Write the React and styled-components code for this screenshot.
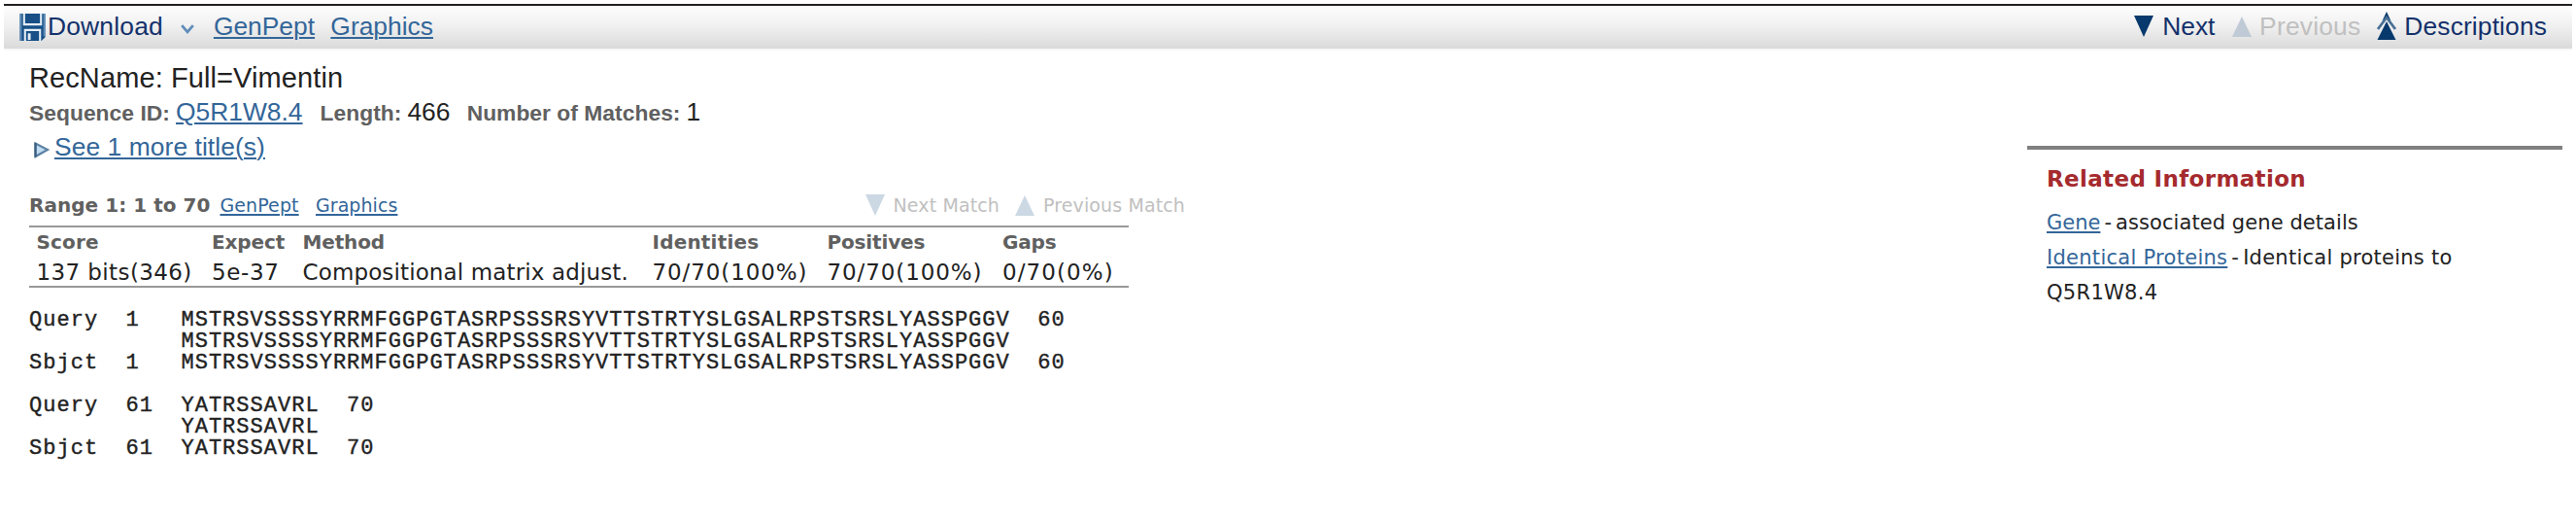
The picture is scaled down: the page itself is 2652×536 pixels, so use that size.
import React from "react";
import styled, { createGlobalStyle } from "styled-components";

const GlobalStyle = createGlobalStyle`
  html, body { margin: 0; background: #fff; }
  body { color: #222; font-family: "Liberation Sans", Arial, sans-serif; }
`;

const Page = styled.div`
  height: 536px;
  overflow: hidden;
  box-sizing: border-box;
  padding: 4px 4px 0;
`;

const Toolbar = styled.header`
  display: flex;
  justify-content: space-between;
  height: 44px;
  padding: 0 26px 0 16px;
  border-top: 2px solid #231f20;
  border-bottom: 2px solid #f7f7f7;
  background: linear-gradient(#fdfdfd, #f1f1f1 45%, #dadada);
  font-size: 26.4px;
  line-height: 42px;
  color: #14316b;
`;

const ToolGroup = styled.div`
  display: flex;
  align-items: flex-start;
  white-space: pre;
`;

const ToolLabel = styled.span`
  letter-spacing: ${(p) => p.$spacing || 0}px;
  margin-left: ${(p) => p.$before || 0}px;
  color: ${(p) => (p.$disabled ? "#c0c0c0" : "inherit")};
`;

const Icon = styled.svg`
  display: block;
  flex: none;
  overflow: visible;
  margin-top: ${(p) => p.$top || 0}px;
  margin-left: ${(p) => p.$before || 0}px;
`;

const Link = styled.a`
  color: #336699;
  text-decoration: underline;
  text-decoration-thickness: 2px;
  text-underline-offset: 2px;
  margin-left: ${(p) => p.$before || 0}px;
  letter-spacing: ${(p) => p.$spacing || 0}px;
`;

const Columns = styled.div`
  display: flex;
  justify-content: space-between;
  align-items: flex-start;
`;

const Report = styled.main`
  width: 1220px;
  padding: 10px 0 0 26px;
  white-space: pre;
`;

const Title = styled.h1`
  margin: 0;
  font-size: 29px;
  font-weight: 400;
  line-height: 36px;
  letter-spacing: 0.1px;
`;

const MetaRow = styled.div`
  display: flex;
  align-items: baseline;
  height: 34px;
  font-size: 26.4px;
  line-height: 34px;
`;

const MetaLabel = styled.b`
  font-size: 22.8px;
  letter-spacing: 0.04px;
  color: #606060;
  margin-left: ${(p) => p.$before || 0}px;
`;

const MetaValue = styled.span`
  margin-left: 6px;
`;

const MoreRow = styled.div`
  display: flex;
  height: 38px;
  font-size: 26.4px;
  line-height: 38px;
`;

const RangeRow = styled.div`
  display: flex;
  height: 42px;
  margin-top: 20px;
  font: 19px/42px "DejaVu Sans", Verdana, sans-serif;
`;

const RangeLinks = styled.div`
  flex: none;
  width: 861px;
`;

const RangeName = styled.b`
  font-size: 20px;
  letter-spacing: 0.04px;
  color: #606060;
`;

const MatchNav = styled.div`
  display: flex;
  color: #c0c0c0;
  letter-spacing: 0.12px;
`;

const MatchLabel = styled.span`
  margin: 0 16.5px 0 8.5px;
`;

const ScoreTable = styled.section`
  display: grid;
  grid-template-columns: 180.5px 93.5px 360px 180px 180.5px 1fr;
  grid-template-rows: 31px 29px;
  width: 1132px;
  height: 64px;
  box-sizing: border-box;
  padding-left: 7.5px;
  border-top: 2px solid #999;
  border-bottom: 2px solid #999;
  font: 23px/30px "DejaVu Sans", Verdana, sans-serif;
`;

const HeadCell = styled.b`
  font-size: 20px;
  line-height: 31px;
  letter-spacing: ${(p) => p.$spacing}px;
  color: #606060;
`;

const Cell = styled.span`
  letter-spacing: ${(p) => p.$spacing}px;
`;

const Alignment = styled.pre`
  margin: 23px 0 0;
  font: 22px/22px "Liberation Mono", "Courier New", monospace;
  letter-spacing: 1.02px;
  -webkit-text-stroke: 0.4px #222;
`;

const Related = styled.aside`
  width: 531px;
  margin: 98px 10px 0 0;
  padding: 20px 0 0 20.5px;
  border-top: 4px solid #808080;
  font: 21px/36px "DejaVu Sans", Verdana, sans-serif;
`;

const RelatedTitle = styled.h2`
  margin: 0 0 17px;
  font-size: 23px;
  line-height: 20px;
  letter-spacing: 0.35px;
  color: #a52a2e;
`;

const RelatedItem = styled.div`
  white-space: pre;
  letter-spacing: ${(p) => p.$spacing}px;
`;

const Dash = styled.span`
  margin: 0 4px;
`;

const DiskIcon = () => (
  <Icon width="27" height="28" viewBox="0 0 27 29" $top={8}>
    <path d="M0 0H27V25L23 29H0Z" fill="#174f86" />
    <path d="M1 0V29M26 0V24" stroke="#5f8db8" strokeWidth="2" />
    <path d="M4.5 0V11.5H22.5V0M5.5 29V17.5H21.5V29" fill="none" stroke="#e4edf5" strokeWidth="2.2" />
    <path d="M10 21V28" stroke="#e4edf5" strokeWidth="3" />
  </Icon>
);

const DownTriangle = ({ color, top, before }) => (
  <Icon width="20" height="22" viewBox="0 0 20 22" $top={top} $before={before}>
    <path d="M0 0H20L10 22Z" fill={color} />
  </Icon>
);

const UpTriangle = ({ color, top, before }) => (
  <Icon width="20" height="21" viewBox="0 0 20 21" $top={top} $before={before}>
    <path d="M10 0L20 21H0Z" fill={color} />
  </Icon>
);

const SEQ = "MSTRSVSSSSYRRMFGGPGTASRPSSSRSYVTTSTRTYSLGSALRPSTSRSLYASSPGGV";
const TAIL = "YATRSSAVRL";
const ALIGNMENT = [
  `Query  1   ${SEQ}  60`,
  `           ${SEQ}`,
  `Sbjct  1   ${SEQ}  60`,
  "",
  `Query  61  ${TAIL}  70`,
  `           ${TAIL}`,
  `Sbjct  61  ${TAIL}  70`,
].join("\n");

const SCORES = [
  { head: "Score", headSpacing: 0.15, value: "137 bits(346)", spacing: 0.4 },
  { head: "Expect", headSpacing: -0.12, value: "5e-37", spacing: 0.65 },
  { head: "Method", headSpacing: -0.14, value: "Compositional matrix adjust.", spacing: 0.13 },
  { head: "Identities", headSpacing: 0.2, value: "70/70(100%)", spacing: 0.9 },
  { head: "Positives", headSpacing: -0.15, value: "70/70(100%)", spacing: 0.9 },
  { head: "Gaps", headSpacing: -0.2, value: "0/70(0%)", spacing: 1.1 },
];

export default function App() {
  return (
    <Page>
      <GlobalStyle />
      <Toolbar>
        <ToolGroup>
          <DiskIcon />
          <ToolLabel $before={2} $spacing={0.19}>Download</ToolLabel>
          <Icon width="14" height="10" viewBox="0 0 14 10" $top={19} $before={18}>
            <path d="M1.2 1.2L7 7.8L12.8 1.2" fill="none" stroke="#5f8db8" strokeWidth="2.8" />
          </Icon>
          <Link $before={20}>GenPept</Link>
          <Link $before={16.3}>Graphics</Link>
        </ToolGroup>
        <ToolGroup>
          <DownTriangle color="#07396c" top={10} />
          <ToolLabel $before={9}>Next</ToolLabel>
          <UpTriangle color="#c0cad6" top={11} before={17.3} />
          <ToolLabel $before={8.4} $spacing={0.2} $disabled>Previous</ToolLabel>
          <Icon width="20" height="29" viewBox="0 0 20 29" $top={6} $before={16.8}>
            <path d="M10 0L14.5 9.5L10 6.5L5.5 9.5Z" fill="#07396c" />
            <path d="M1 18L10 6L19 18" fill="none" stroke="#4a7096" strokeWidth="2.8" />
            <path d="M10 10L19.5 29H0.5Z" fill="#07396c" />
          </Icon>
          <ToolLabel $before={8.2} $spacing={0.12}>Descriptions</ToolLabel>
        </ToolGroup>
      </Toolbar>
      <Columns>
        <Report>
          <Title>RecName: Full=Vimentin</Title>
          <MetaRow>
            <MetaLabel>Sequence ID:</MetaLabel>
            <Link $before={6.1}>Q5R1W8.4</Link>
            <MetaLabel $before={18}>Length:</MetaLabel>
            <MetaValue>466</MetaValue>
            <MetaLabel $before={17.2}>Number of Matches:</MetaLabel>
            <MetaValue>1</MetaValue>
          </MetaRow>
          <MoreRow>
            <Icon width="24" height="24" viewBox="0 0 24 24" $top={9}>
              <path d="M6.5 6.5V20L19 13Z" fill="#bfdcf0" stroke="#5d82a4" strokeWidth="2.2" />
              <path d="M6.5 6V20.5" stroke="#3c5f80" strokeWidth="2.2" />
            </Icon>
            <Link $before={2} $spacing={0.07}>See 1 more title(s)</Link>
          </MoreRow>
          <RangeRow>
            <RangeLinks>
              <RangeName>Range 1: 1 to 70</RangeName>
              <Link $before={10} $spacing={0.1}>GenPept</Link>
              <Link $before={17.4} $spacing={0.06}>Graphics</Link>
            </RangeLinks>
            <MatchNav>
              <DownTriangle color="#ccd8e3" top={10} />
              <MatchLabel>Next Match</MatchLabel>
              <UpTriangle color="#ccd8e3" top={11} />
              <MatchLabel>Previous Match</MatchLabel>
            </MatchNav>
          </RangeRow>
          <ScoreTable>
            {SCORES.map((s) => (
              <HeadCell key={s.head} $spacing={s.headSpacing}>{s.head}</HeadCell>
            ))}
            {SCORES.map((s) => (
              <Cell key={s.head} $spacing={s.spacing}>{s.value}</Cell>
            ))}
          </ScoreTable>
          <Alignment>{ALIGNMENT}</Alignment>
        </Report>
        <Related>
          <RelatedTitle>Related Information</RelatedTitle>
          <RelatedItem $spacing={0.07}>
            <Link>Gene</Link>
            <Dash>-</Dash>associated gene details
          </RelatedItem>
          <RelatedItem $spacing={0.25}>
            <Link $spacing={0.28}>Identical Proteins</Link>
            <Dash>-</Dash>Identical proteins to
          </RelatedItem>
          <RelatedItem $spacing={0.3}>Q5R1W8.4</RelatedItem>
        </Related>
      </Columns>
    </Page>
  );
}
